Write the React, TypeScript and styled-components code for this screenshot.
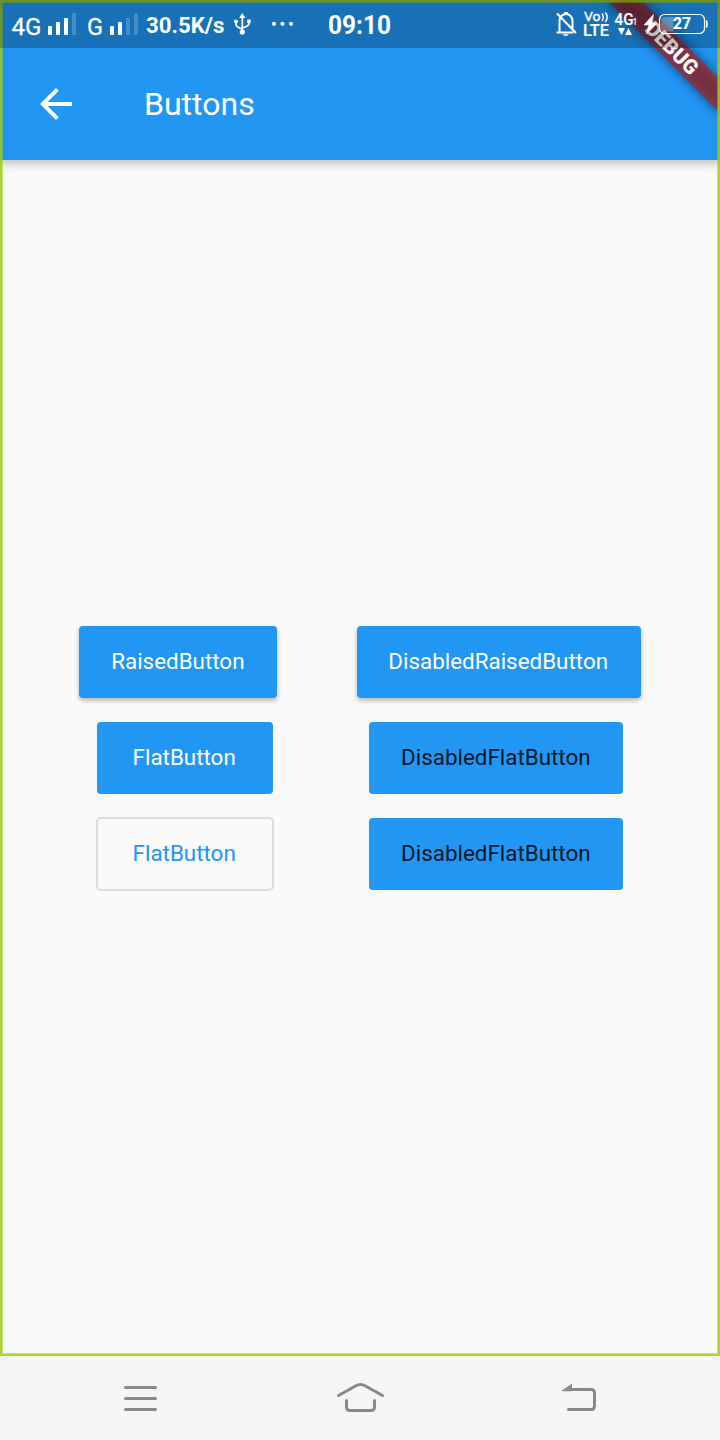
import React from "react";
import styled, { createGlobalStyle, css } from "styled-components";

const BLUE = "#2196f3";

const GlobalStyle = createGlobalStyle`
  * { box-sizing: border-box; }
  body { margin: 0; background: #f5f5f5; font-family: Roboto, sans-serif; }
`;

const Phone = styled.div`
  width: 720px;
  height: 1440px;
  display: flex;
  flex-direction: column;
  overflow: hidden;
`;

const AppWindow = styled.div`
  position: relative;
  height: 1356px;
  display: flex;
  flex-direction: column;
  overflow: hidden;
  background: #fafafa;
`;

const WindowOutline = styled.div`
  position: absolute;
  inset: 0;
  border: 2px solid rgba(160, 205, 20, 0.87);
  box-shadow: inset 0 0 0 1px rgba(160, 205, 20, 0.55);
  pointer-events: none;
`;

const StatusBar = styled.div`
  position: absolute;
  inset: 0 0 auto;
  height: 48px;
  background: rgba(0, 0, 0, 0.25);
`;

const AppBar = styled.header`
  height: 160px;
  flex: none;
  padding: 48px 0 0 32px;
  display: flex;
  align-items: center;
  gap: 64px;
  background: ${BLUE};
  box-shadow: 0 4px 8px rgba(0, 0, 0, 0.13), 0 4px 12px rgba(0, 0, 0, 0.12);
`;

const Title = styled.h1`
  margin: 0;
  font-size: 32px;
  font-weight: 400;
  line-height: 40px;
  color: #fff;
`;

const Content = styled.main`
  flex: 1;
  display: flex;
  flex-direction: column;
  justify-content: center;
`;

const ButtonRow = styled.div`
  height: 96px;
  display: flex;
  align-items: center;
  justify-content: space-evenly;
`;

const Button = styled.button<{ $width: number; $variant: "raised" | "flat" | "disabled" | "outline" }>`
  width: ${(p) => p.$width}px;
  height: 72px;
  padding: 0 1px 2px 0;
  border: 0;
  border-radius: 4px;
  font: 400 22.4px/26px Roboto, sans-serif;
  white-space: nowrap;
  color: #fff;
  background: ${BLUE};
  ${(p) =>
    p.$variant === "raised" &&
    css`
      box-shadow: 0 3px 5px rgba(0, 0, 0, 0.16), 0 2px 5px rgba(0, 0, 0, 0.12);
    `}
  ${(p) => p.$variant === "disabled" && css`color: rgba(0, 0, 0, 0.87);`}
  ${(p) =>
    p.$variant === "outline" &&
    css`
      height: 74px;
      margin: 0 -1px;
      color: ${BLUE};
      background: transparent;
      border: 2px solid #dcdcdc;
      border-radius: 5px;
    `}
`;

const RibbonShadow = styled.div`
  position: absolute;
  left: 640px;
  top: 56px;
  width: 160px;
  height: 24px;
  transform-origin: 80px -56px;
  transform: rotate(45deg);
  background: rgba(0, 0, 0, 0.5);
  filter: blur(6px);
`;

const Ribbon = styled(RibbonShadow)`
  display: flex;
  align-items: center;
  justify-content: center;
  background: rgba(183, 28, 28, 0.627);
  filter: none;
  color: #fff;
  font-size: 20.4px;
  font-weight: 900;
  line-height: 24px;
`;

const NavBar = styled.nav`
  height: 84px;
  background: #f5f5f5;
`;

const Drawing = styled.svg`
  display: block;
  font-family: Roboto, sans-serif;
`;

function StatusIcons() {
  return (
    <Drawing width="720" height="48" fill="#fff">
      <text x="11.500" y="34.500" fontSize="23.500" textLength="30" lengthAdjust="spacingAndGlyphs" fontWeight="400" stroke="#fff" strokeWidth=".3">4G</text>
      <rect x="48" y="26" width="4" height="9" rx="1" />
      <rect x="56" y="22" width="4" height="13" rx="1" />
      <rect x="64" y="18" width="4" height="17" rx="1" />
      <rect x="72" y="13" width="4" height="22" rx="1" opacity=".2" />
      <text x="87" y="34.500" fontSize="23.500" textLength="16" lengthAdjust="spacingAndGlyphs" fontWeight="400" stroke="#fff" strokeWidth=".3">G</text>
      <rect x="110" y="26" width="4" height="9" rx="1" />
      <rect x="118" y="22" width="4" height="13" rx="1" />
      <rect x="126" y="18" width="4" height="17" rx="1" opacity=".2" />
      <rect x="134" y="13" width="4" height="22" rx="1" opacity=".2" />
      <text x="146" y="33" fontSize="22.500" textLength="78.500" lengthAdjust="spacingAndGlyphs" fontWeight="700">30.5K/s</text>

      <path d="M242.300 17v15M236 22v2.500q0 2.500 6.300 4.500M249 21v2.500q0 2.500-6.700 4.500" fill="none" stroke="#fff" strokeWidth="1.700" />
      <path d="M242.300 13l3.200 5h-6.400z" />
      <circle cx="242.300" cy="32" r="2.600" />
      <circle cx="236" cy="21.500" r="2" />
      <rect x="247.200" y="19.500" width="3.500" height="3.500" />

      <circle cx="274" cy="23.800" r="2.100" />
      <circle cx="282.500" cy="23.800" r="2.100" />
      <circle cx="291" cy="23.800" r="2.100" />
      <text x="328" y="34" fontSize="25.500" textLength="63" lengthAdjust="spacingAndGlyphs" fontWeight="700">09:10</text>

      <g fill="none" stroke="#fff" strokeWidth="2">
        <path d="M559.500 32V21a6.500 7 0 0 1 13 0v8.500M556.500 32.500h17M557 13.500l19 19.500M564 13h4" />
      </g>
      <path d="M562.500 34.200h6.500q-1 1.800-3.200 1.800t-3.300-1.800z" />

      <text x="584" y="21.300" fontSize="13" fontWeight="400" stroke="#fff" strokeWidth=".35" textLength="16.500" lengthAdjust="spacingAndGlyphs">Vo</text>
      <path d="M602 13.500q2.600 3.700 0 7.500M605.300 12.500q3.800 4.700 0 9.500" fill="none" stroke="#fff" strokeWidth="1.400" />
      <text x="583" y="36" fontSize="15.800" fontWeight="500" stroke="#fff" strokeWidth=".2" textLength="26" lengthAdjust="spacingAndGlyphs">LTE</text>

      <text x="614.500" y="25" fontSize="16.800" fontWeight="500" stroke="#fff" strokeWidth=".2" textLength="19" lengthAdjust="spacingAndGlyphs">4G</text>
      <text x="632.500" y="25" fontSize="8.500" fontWeight="500">1</text>
      <path d="M618 28h7l-3.500 7zM625 35h7l-3.500-7z" />

      <path d="M653.500 14.500l-9.500 10.500h5l-2.500 9 10.500-11h-5z" stroke="#fff" strokeWidth=".6" strokeLinejoin="round" />
      <path d="M664 17h9.500v14.500h-9.500q-3 0-3-3v-8.500q0-3 3-3z" opacity=".3" />
      <rect x="659.500" y="14.500" width="45" height="19" rx="5" fill="none" stroke="#fff" strokeWidth="1.200" />
      <path d="M706 20q1.800 0 1.800 4t-1.800 4z" />
      <text x="673" y="29" fontSize="16" fontWeight="700" stroke="#fff" strokeWidth=".2" textLength="18" lengthAdjust="spacingAndGlyphs">27</text>
    </Drawing>
  );
}

export default function App() {
  return (
    <>
      <GlobalStyle />
      <Phone>
        <AppWindow>
          <AppBar>
            <Drawing width="48" height="48" viewBox="0 0 24 24" fill="#fff">
              <path d="M20 11H7.830l5.590-5.590L12 4l-8 8 8 8 1.410-1.410L7.830 13H20v-2z" />
            </Drawing>
            <Title>Buttons</Title>
          </AppBar>
          <Content>
            <ButtonRow>
              <Button $variant="raised" $width={198}>RaisedButton</Button>
              <Button $variant="raised" $width={284}>DisabledRaisedButton</Button>
            </ButtonRow>
            <ButtonRow>
              <Button $variant="flat" $width={176}>FlatButton</Button>
              <Button $variant="disabled" $width={254}>DisabledFlatButton</Button>
            </ButtonRow>
            <ButtonRow>
              <Button $variant="outline" $width={178}>FlatButton</Button>
              <Button $variant="disabled" $width={254}>DisabledFlatButton</Button>
            </ButtonRow>
          </Content>
          <RibbonShadow />
          <Ribbon>DEBUG</Ribbon>
          <WindowOutline />
          <StatusBar>
            <StatusIcons />
          </StatusBar>
        </AppWindow>
        <NavBar>
          <Drawing width="720" height="84" fill="none" stroke="#888" strokeWidth="3" strokeLinecap="round" strokeLinejoin="round">
            <path d="M125.500 31.500h30M125.500 42.500h30M125.500 53.500h30" />
            <path d="M338.500 39.500l17-9.500q5-2.800 10 0l17 9.500M346.500 44.500v6.500q0 3.500 3.500 3.500h21q3.500 0 3.500-3.500v-6.500" />
            <path d="M568 33.500h23q3.500 0 3.500 3.500v13q0 3.500-3.500 3.500h-22.500" />
            <path d="M562.500 34.500l9-6v6z" fill="#888" stroke="#888" strokeWidth="1" />
          </Drawing>
        </NavBar>
      </Phone>
    </>
  );
}
